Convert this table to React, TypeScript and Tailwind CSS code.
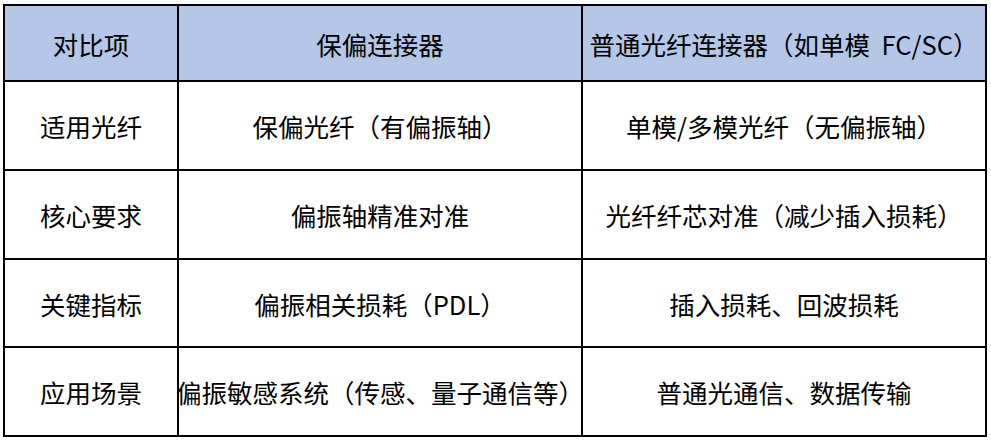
const rows: string[][] = [
  ["适用光纤", "保偏光纤（有偏振轴）", "单模/多模光纤（无偏振轴）"],
  ["核心要求", "偏振轴精准对准", "光纤纤芯对准（减少插入损耗）"],
  ["关键指标", "偏振相关损耗（PDL）", "插入损耗、回波损耗"],
  ["应用场景", "偏振敏感系统（传感、量子通信等）", "普通光通信、数据传输"],
];

const header = ["对比项", "保偏连接器", "普通光纤连接器（如单模  FC/SC）"];

export default function App() {
  return (
    <div className="w-[991px] h-[441px] bg-white pt-[4px] pl-[3px] font-['Microsoft_YaHei','Noto_Sans_CJK_SC',sans-serif] text-[25.5px] text-black">
      <div className="grid w-[984px] grid-cols-[172px_402px_402px] grid-rows-[74px_87px_87px_86px_87px] gap-[2px] bg-black p-[2px]">
        {header.map((h) => (
          <div key={h} className="flex items-center justify-center whitespace-pre bg-[#b4c7e7] pt-[2px]">
            {h}
          </div>
        ))}
        {rows.map((r) =>
          r.map((c, i) => (
            <div key={r[0] + i} className="flex items-center justify-center whitespace-nowrap bg-white pt-[2px]">
              {c}
            </div>
          ))
        )}
      </div>
    </div>
  );
}
